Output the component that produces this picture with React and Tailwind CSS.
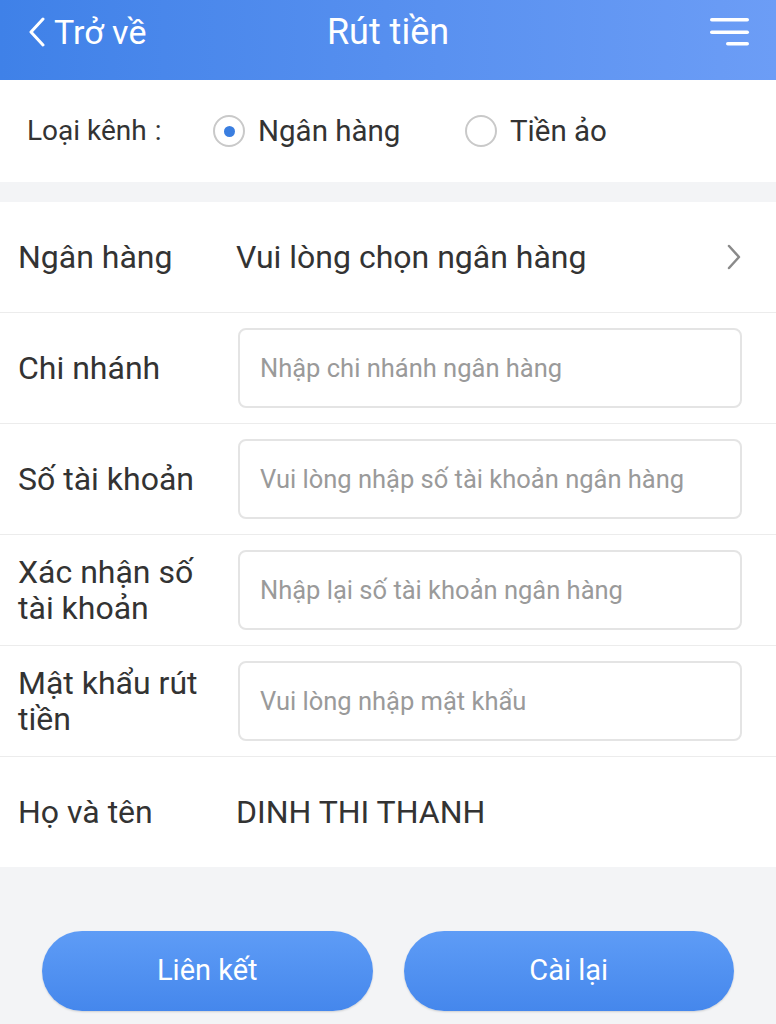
import React from "react";

const font = { fontFamily: "Roboto, 'Noto Sans', sans-serif" };

function InputRow({ label, placeholder }) {
  return (
    <div className="flex h-[111px] items-center border-b border-[#ececec] pl-[18px] pr-[34px]">
      <div className="w-[220px] text-[32px] leading-[36px] text-[#333]">{label}</div>
      <div className="flex h-[80px] flex-1 items-center rounded-[8px] border-2 border-[#e4e4e4] pl-[20px] text-[25.5px] text-[#9a9a9a]">
        {placeholder}
      </div>
    </div>
  );
}

export default function App() {
  return (
    <div className="flex h-[1024px] w-[776px] flex-col overflow-hidden bg-[#f3f4f6]" style={font}>
      {/* header */}
      <div className="relative flex h-[80px] items-start bg-gradient-to-r from-[#3f81e8] to-[#6c9df6] text-white">
        <div className="flex h-[64px] items-center pl-[27px] text-[34px]">
          <svg width="20" height="30" viewBox="0 0 20 30" className="mr-[7px]">
            <path d="M16 2 L4 15 L16 28" fill="none" stroke="white" strokeWidth="3" strokeLinecap="round" strokeLinejoin="round" />
          </svg>
          <span>Trở về</span>
        </div>
        <div className="absolute left-0 right-0 top-0 flex h-[64px] items-center justify-center text-[36px]">Rút tiền</div>
        <svg width="40" height="30" viewBox="0 0 40 30" className="absolute right-[26px] top-[17px]">
          <rect x="0" y="1" width="39" height="3.5" rx="1.75" fill="white" />
          <rect x="0" y="13.5" width="39" height="3.5" rx="1.75" fill="white" />
          <rect x="16" y="25" width="23" height="3.5" rx="1.75" fill="white" />
        </svg>
      </div>

      {/* channel type */}
      <div className="flex h-[102px] items-center bg-white pl-[27px] text-[29.5px] text-[#333]">
        <span className="w-[186px] text-[28px]">
          Loại kênh<span className="ml-[8px]">:</span>
        </span>
        <span className="mr-[13px] flex h-[32px] w-[32px] items-center justify-center rounded-full border-2 border-[#c9c9c9]">
          <span className="h-[11px] w-[11px] rounded-full bg-[#3a7ee0]" />
        </span>
        <span className="w-[207px]">Ngân hàng</span>
        <span className="mr-[13px] h-[32px] w-[32px] rounded-full border-2 border-[#c9c9c9]" />
        <span>Tiền ảo</span>
      </div>

      {/* form */}
      <div className="mt-[20px] bg-white">
        <div className="flex h-[111px] items-center border-b border-[#ececec] pl-[18px] pr-[34px]">
          <div className="w-[218px] text-[32px] text-[#333]">Ngân hàng</div>
          <div className="flex-1 text-[32px] text-[#333]">Vui lòng chọn ngân hàng</div>
          <svg width="16" height="28" viewBox="0 0 16 28">
            <path d="M3 3 L13 14 L3 25" fill="none" stroke="#8a8a8a" strokeWidth="2.5" strokeLinecap="round" strokeLinejoin="round" />
          </svg>
        </div>
        <InputRow label="Chi nhánh" placeholder="Nhập chi nhánh ngân hàng" />
        <InputRow label="Số tài khoản" placeholder="Vui lòng nhập số tài khoản ngân hàng" />
        <InputRow label={<>Xác nhận số<br />tài khoản</>} placeholder="Nhập lại số tài khoản ngân hàng" />
        <InputRow label={<>Mật khẩu rút<br />tiền</>} placeholder="Vui lòng nhập mật khẩu" />
        <div className="flex h-[110px] items-center pl-[18px]">
          <div className="w-[218px] text-[32px] text-[#333]">Họ và tên</div>
          <div className="text-[32px] text-[#333]">DINH THI THANH</div>
        </div>
      </div>

      {/* actions */}
      <div className="mt-[64px] flex gap-[31px] px-[42px]">
        <button className="h-[80px] flex-1 rounded-full bg-gradient-to-b from-[#5e9cf6] to-[#4587ec] text-[29px] text-white shadow-[0_1px_2px_rgba(0,0,0,0.15)]">
          Liên kết
        </button>
        <button className="h-[80px] flex-1 rounded-full bg-gradient-to-b from-[#5e9cf6] to-[#4587ec] text-[29px] text-white shadow-[0_1px_2px_rgba(0,0,0,0.15)]">
          Cài lại
        </button>
      </div>
    </div>
  );
}
